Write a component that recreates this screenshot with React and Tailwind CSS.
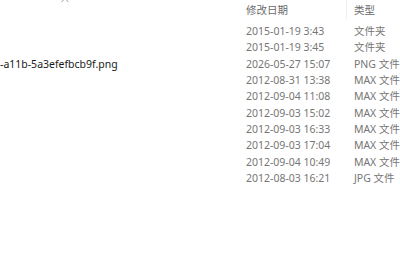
const rows = [
  { date: "2015-01-19 3:43", type: "文件夹" },
  { date: "2015-01-19 3:45", type: "文件夹" },
  { date: "2026-05-27 15:07", type: "PNG 文件", name: "-a11b-5a3efefbcb9f.png" },
  { date: "2012-08-31 13:38", type: "MAX 文件" },
  { date: "2012-09-04 11:08", type: "MAX 文件" },
  { date: "2012-09-03 15:02", type: "MAX 文件" },
  { date: "2012-09-03 16:33", type: "MAX 文件" },
  { date: "2012-09-03 17:04", type: "MAX 文件" },
  { date: "2012-09-04 10:49", type: "MAX 文件" },
  { date: "2012-08-03 16:21", type: "JPG 文件" },
];

export default function App() {
  return (
    <div
      className="w-[400px] h-[257px] bg-white overflow-hidden text-[10.5px] leading-none"
      style={{ fontFamily: '"Noto Sans", "Noto Sans CJK SC", sans-serif' }}
    >
      {/* header */}
      <div className="flex h-[20px] items-center relative">
        <div className="w-[242px] relative h-full">
          <svg className="absolute left-[61px] -top-[3px]" width="8" height="6" viewBox="0 0 8 6">
            <path d="M0.5 5 L4 1.5 L7.5 5" fill="none" stroke="#9a9a9a" strokeWidth="1" />
          </svg>
        </div>
        <div className="w-[105px] h-full pl-[4px] flex items-center text-[#6a6a6a] border-r border-[#f0f0f0]">修改日期</div>
        <div className="flex-1 pl-[7px] text-[#6a6a6a]">类型</div>
      </div>
      {/* rows */}
      <div className="pt-[3px]">
        {rows.map((r, i) => (
          <div key={i} className="flex h-[16.33px] items-center">
            <div className="w-[242px] text-[#1a1a1a] whitespace-nowrap">{r.name}</div>
            <div className="w-[105px] pl-[4px] text-[#767676] whitespace-nowrap">{r.date}</div>
            <div className="flex-1 pl-[7px] text-[#767676] whitespace-nowrap">{r.type}</div>
          </div>
        ))}
      </div>
    </div>
  );
}
